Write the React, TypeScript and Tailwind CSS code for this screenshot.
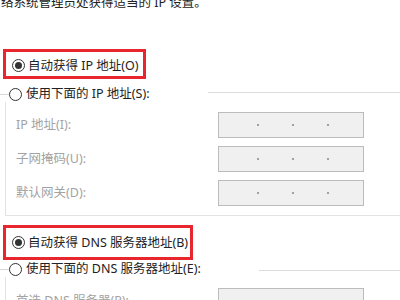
import React from "react";

function Radio({ checked }: { checked?: boolean }) {
  return (
    <span className="w-[13px] h-[13px] rounded-full border border-[#333] bg-white flex items-center justify-center shrink-0">
      {checked && <span className="w-[7px] h-[7px] rounded-full bg-[#333]" />}
    </span>
  );
}

function IpField() {
  return (
    <div className="w-[146px] h-[26px] border border-[#bcbcbc] bg-[#f0f0f0] flex items-center pl-[38px] gap-[33px]">
      <span className="w-[2px] h-[2px] rounded-full bg-[#888]" />
      <span className="w-[2px] h-[2px] rounded-full bg-[#888]" />
      <span className="w-[2px] h-[2px] rounded-full bg-[#888]" />
    </div>
  );
}

function FieldRow({ label }: { label: string }) {
  return (
    <div className="flex items-center h-[26px]">
      <span className="w-[212px] pl-[10px] text-[#a3a3a3]">{label}</span>
      <IpField />
    </div>
  );
}

export default function App() {
  return (
    <div className="w-[400px] h-[300px] overflow-hidden bg-white text-[12.5px] text-[#222] font-['Noto_Sans','Noto_Sans_CJK_SC',sans-serif] leading-[16px]">
      {/* cut-off intro line */}
      <div className="-mt-[5px] h-[14px] pl-[1px]">络系统管理员处获得适当的 IP 设置。</div>

      {/* automatic IP */}
      <div className="mt-[40px] ml-[3px] w-[143px] h-[30px] border-[3px] border-[#e8262d] flex items-center gap-[3px] pl-[6px] pt-[3px]">
        <Radio checked />
        <span>自动获得 IP 地址(O)</span>
      </div>

      {/* manual IP group */}
      <div className="mt-[7px] flex items-start h-[16px]">
        <span className="w-[9px] h-px bg-[#d8d8d8] mt-[8px]" />
        <span className="mt-[2px]"><Radio /></span>
        <span className="ml-[4px]">使用下面的 IP 地址(S):</span>
        <span className="flex-1 h-px bg-[#dcdcdc] ml-[58px] mt-[6px]" />
      </div>
      <div className="ml-[5px] border-l border-b border-[#e3e3e3] pt-[10px] pb-[9px] flex flex-col gap-[8px]">
        <FieldRow label="IP 地址(I):" />
        <FieldRow label="子网掩码(U):" />
        <FieldRow label="默认网关(D):" />
      </div>

      {/* automatic DNS */}
      <div className="mt-[9px] ml-[3px] w-[190px] h-[35px] border-[3px] border-[#e8262d] flex items-center gap-[3px] pl-[6px]">
        <Radio checked />
        <span>自动获得 DNS 服务器地址(B)</span>
      </div>

      {/* manual DNS group */}
      <div className="mt-[1px] flex items-start h-[16px]">
        <span className="w-[9px] h-px bg-[#d8d8d8] mt-[8px]" />
        <span className="mt-[2px]"><Radio /></span>
        <span className="ml-[4px]">使用下面的 DNS 服务器地址(E):</span>
        <span className="flex-1 h-px bg-[#dcdcdc] ml-[58px] mt-[9px]" />
      </div>
      <div className="ml-[5px] border-l border-[#e3e3e3] pt-[11px]">
        <FieldRow label="首选 DNS 服务器(P):" />
      </div>
    </div>
  );
}
